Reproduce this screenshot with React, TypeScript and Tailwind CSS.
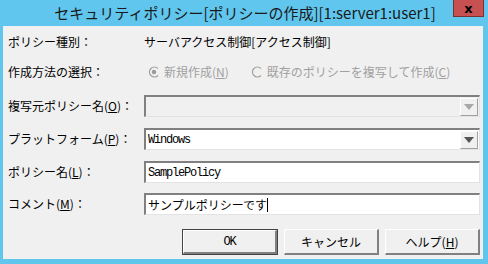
import React from "react";

const jp = { fontFamily: '"Noto Sans CJK JP", "Noto Sans", sans-serif' };
const mono = { fontFamily: '"Liberation Mono", "Noto Sans CJK JP", monospace', letterSpacing: "-1.2px" };

function Sunken({ children, disabled }: { children?: React.ReactNode; disabled?: boolean }) {
  return (
    <div className="h-[22px] w-full border-t-2 border-l-2 border-t-[#808080] border-l-[#808080] border-b border-r border-b-[#e3e3e3] border-r-[#e3e3e3]">
      <div className={`h-full w-full flex items-center ${disabled ? "bg-[#f0f0f0]" : "bg-white"}`}>{children}</div>
    </div>
  );
}

function Combo({ value, disabled }: { value?: string; disabled?: boolean }) {
  return (
    <Sunken disabled={disabled}>
      <div className="flex-1 pl-[2px] text-[12px] text-black leading-none" style={mono}>{value}</div>
      <div className="h-[18px] w-[18px] mr-px bg-[#f0f0f0] border-t border-l border-t-white border-l-white border-b border-r border-b-[#a0a0a0] border-r-[#a0a0a0] flex items-center justify-center">
        <svg width="10" height="6" viewBox="0 0 10 6">
          <polygon points="0,0 10,0 5,6" fill={disabled ? "#a8a8a8" : "#555"} />
        </svg>
      </div>
    </Sunken>
  );
}

function Radio({ checked }: { checked?: boolean }) {
  return (
    <svg width="12" height="12" viewBox="0 0 12 12">
      <path d="M10 2.5 A5 5 0 1 0 10 9.5" fill="none" stroke="#a0a0a0" strokeWidth="1.2" />
      {checked && <circle cx="6" cy="6" r="2.2" fill="#9a9a9a" />}
    </svg>
  );
}

function Button({ children, isDefault }: { children: React.ReactNode; isDefault?: boolean }) {
  return (
    <div className={`h-[26px] ${isDefault ? "w-[96px] border border-[#444]" : "w-[95px]"}`}>
      <div className="h-full w-full border-t border-l border-t-white border-l-white border-b-2 border-r-2 border-b-[#808080] border-r-[#808080] bg-[#f0f0f0] flex items-center justify-center text-[12px] text-black">
        {children}
      </div>
    </div>
  );
}

function Row({ label, children, className }: { label: React.ReactNode; children: React.ReactNode; className?: string }) {
  return (
    <div className={`flex items-center ${className ?? ""}`}>
      <div className="w-[136px] shrink-0 text-[12px] text-black whitespace-nowrap">{label}</div>
      <div className="flex-1 flex items-center">{children}</div>
    </div>
  );
}

function Acc({ k }: { k: string }) {
  return <>(<span className="underline">{k}</span>)</>;
}

export default function App() {
  return (
    <div className="w-[488px] h-[264px] bg-[#60c6ee] flex flex-col overflow-hidden" style={jp}>
      <div className="relative h-[26px] shrink-0 flex items-center justify-center">
        <span className="text-[15px] text-[#1a1a1a] pl-[2px]" style={jp}>
          セキュリティポリシー[ポリシーの作成][1:server1:user1]
        </span>
        <div className="absolute right-[4px] top-0 w-[31px] h-[17px] bg-[#c75050] border border-t-0 border-[#7a3030] flex items-center justify-center">
          <span className="text-[13px] font-bold text-black leading-none" style={{ fontFamily: '"DejaVu Sans", sans-serif' }}>x</span>
        </div>
      </div>
      <div className="flex-1 ml-[3px] mr-[5px] mb-[5px] bg-[#f0f0f0] pl-[5px] pr-[3px] pt-[6px] flex flex-col">
        <Row label="ポリシー種別：" className="h-[20px]">
          <span className="text-[12px] text-black">サーバアクセス制御[アクセス制御]</span>
        </Row>
        <Row label="作成方法の選択：" className="h-[20px] mt-[10px]">
          <div className="flex items-center gap-[4px] ml-[4px] text-[12px] text-[#a0a0a0]">
            <Radio checked />
            <span>新規作成<Acc k="N" /></span>
          </div>
          <div className="flex items-center gap-[4px] ml-[22px] text-[12px] text-[#a0a0a0]">
            <Radio />
            <span>既存のポリシーを複写して作成<Acc k="C" /></span>
          </div>
        </Row>
        <Row label={<>複写元ポリシー名<Acc k="O" />：</>} className="h-[22px] mt-[13px]">
          <Combo disabled />
        </Row>
        <Row label={<>プラットフォーム<Acc k="P" />：</>} className="h-[22px] mt-[11px]">
          <Combo value="Windows" />
        </Row>
        <Row label={<>ポリシー名<Acc k="L" />：</>} className="h-[22px] mt-[11px]">
          <Sunken>
            <span className="pl-[2px] text-[12px] text-black leading-none" style={mono}>SamplePolicy</span>
          </Sunken>
        </Row>
        <Row label={<>コメント<Acc k="M" />：</>} className="h-[22px] mt-[10px]">
          <Sunken>
            <span className="pl-[2px] text-[12px] text-black leading-none">サンプルポリシーです</span>
            <span className="w-px h-[14px] bg-black" />
          </Sunken>
        </Row>
        <div className="flex justify-end gap-[6px] mt-[14px]">
          <Button isDefault><span style={mono}>OK</span></Button>
          <Button>キャンセル</Button>
          <Button>ヘルプ<Acc k="H" /></Button>
        </div>
      </div>
    </div>
  );
}
